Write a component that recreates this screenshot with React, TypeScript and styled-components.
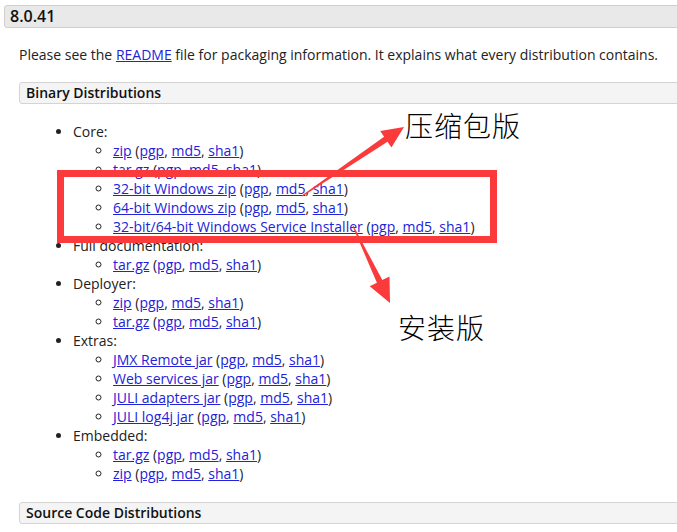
import React from "react";
import { styled, createGlobalStyle } from "styled-components";

const GlobalStyle = createGlobalStyle`
  html, body {
    margin: 0;
    padding: 0;
    background: #fff;
    overflow: hidden;
  }
  body {
    font-family: "Open Sans", "Liberation Sans", sans-serif;
    font-size: 14px;
    color: #222;
  }
`;

const Page = styled.div`
  position: relative;
  width: 677px;
  height: 532px;
  overflow: hidden;
  padding: 5px 0 0 4px;
  box-sizing: border-box;
`;

const VersionBar = styled.h3`
  margin: 0 -40px 0 0;
  height: 23px;
  line-height: 21px;
  box-sizing: border-box;
  padding-left: 5px;
  border: 1px solid #cfcfcf;
  border-radius: 3px;
  background: #e9e9e9;
  font-size: 16px;
  font-weight: 600;
  color: #111;
`;

const Section = styled.div`
  padding-left: 15px;
`;

const Para = styled.p`
  margin: 17px 0 0;
  line-height: 19px;
`;

const SubBar = styled.h4<{ $top: number }>`
  margin: ${(p) => p.$top}px -40px 0 0;
  height: 22px;
  line-height: 20px;
  box-sizing: border-box;
  padding-left: 6px;
  border: 1px solid #d4d4d4;
  border-radius: 3px;
  background: #f4f4f4;
  font-size: 14px;
  font-weight: 600;
  color: #111;
`;

const OuterList = styled.ul`
  margin: 18px 0 0;
  padding-left: 54px;
  list-style: disc;
  line-height: 19px;
`;

const InnerList = styled.ul`
  margin: 0;
  padding-left: 40px;
  list-style: circle;
`;

const Link = styled.a`
  color: #2222d8;
  text-decoration: underline;
`;

const Box = styled.div`
  position: absolute;
  left: 57px;
  top: 170px;
  width: 440px;
  height: 73px;
  box-sizing: border-box;
  border: 7px solid #fb3b3b;
  pointer-events: none;
`;

const Overlay = styled.svg`
  position: absolute;
  left: 0;
  top: 0;
  pointer-events: none;
`;

const Label = styled.div<{ $x: number; $y: number }>`
  position: absolute;
  left: ${(p) => p.$x}px;
  top: ${(p) => p.$y}px;
  font-family: "Noto Sans CJK SC", "Noto Sans", sans-serif;
  font-size: 28px;
  font-weight: 300;
  line-height: 1;
  color: #000;
  letter-spacing: 1px;
`;

const groups: { title: string; items: string[] }[] = [
  {
    title: "Core:",
    items: [
      "zip",
      "tar.gz",
      "32-bit Windows zip",
      "64-bit Windows zip",
      "32-bit/64-bit Windows Service Installer",
    ],
  },
  { title: "Full documentation:", items: ["tar.gz"] },
  { title: "Deployer:", items: ["zip", "tar.gz"] },
  {
    title: "Extras:",
    items: [
      "JMX Remote jar",
      "Web services jar",
      "JULI adapters jar",
      "JULI log4j jar",
    ],
  },
  { title: "Embedded:", items: ["tar.gz", "zip"] },
];

function Download({ name }: { name: string }) {
  return (
    <li>
      <Link href="#">{name}</Link> (<Link href="#">pgp</Link>,{" "}
      <Link href="#">md5</Link>, <Link href="#">sha1</Link>)
    </li>
  );
}

export default function App() {
  return (
    <Page>
      <GlobalStyle />
      <VersionBar>8.0.41</VersionBar>
      <Section>
        <Para>
          Please see the <Link href="#">README</Link> file for packaging
          information. It explains what every distribution contains.
        </Para>
        <SubBar $top={18}>Binary Distributions</SubBar>
        <OuterList>
          {groups.map((g) => (
            <li key={g.title}>
              {g.title}
              <InnerList>
                {g.items.map((it, i) => (
                  <Download key={i} name={it} />
                ))}
              </InnerList>
            </li>
          ))}
        </OuterList>
        <SubBar $top={19}>Source Code Distributions</SubBar>
      </Section>

      <Box />
      <Overlay width="677" height="532" viewBox="0 0 677 532">
        <polygon
          fill="#fb3b3b"
          points="302.3,196.4 387.5,141.8 391.4,147.6 404,127 380.2,131 384.1,136.8 301.7,195.6"
        />
        <polygon
          fill="#fb3b3b"
          points="353.4,225.8 382.3,280.1 389.5,276.6 390,303 369.7,286.2 376.9,282.7 352.6,226.2"
        />
      </Overlay>
      <Label $x={405} $y={111}>压缩包版</Label>
      <Label $x={398} $y={313}>安装版</Label>
    </Page>
  );
}
